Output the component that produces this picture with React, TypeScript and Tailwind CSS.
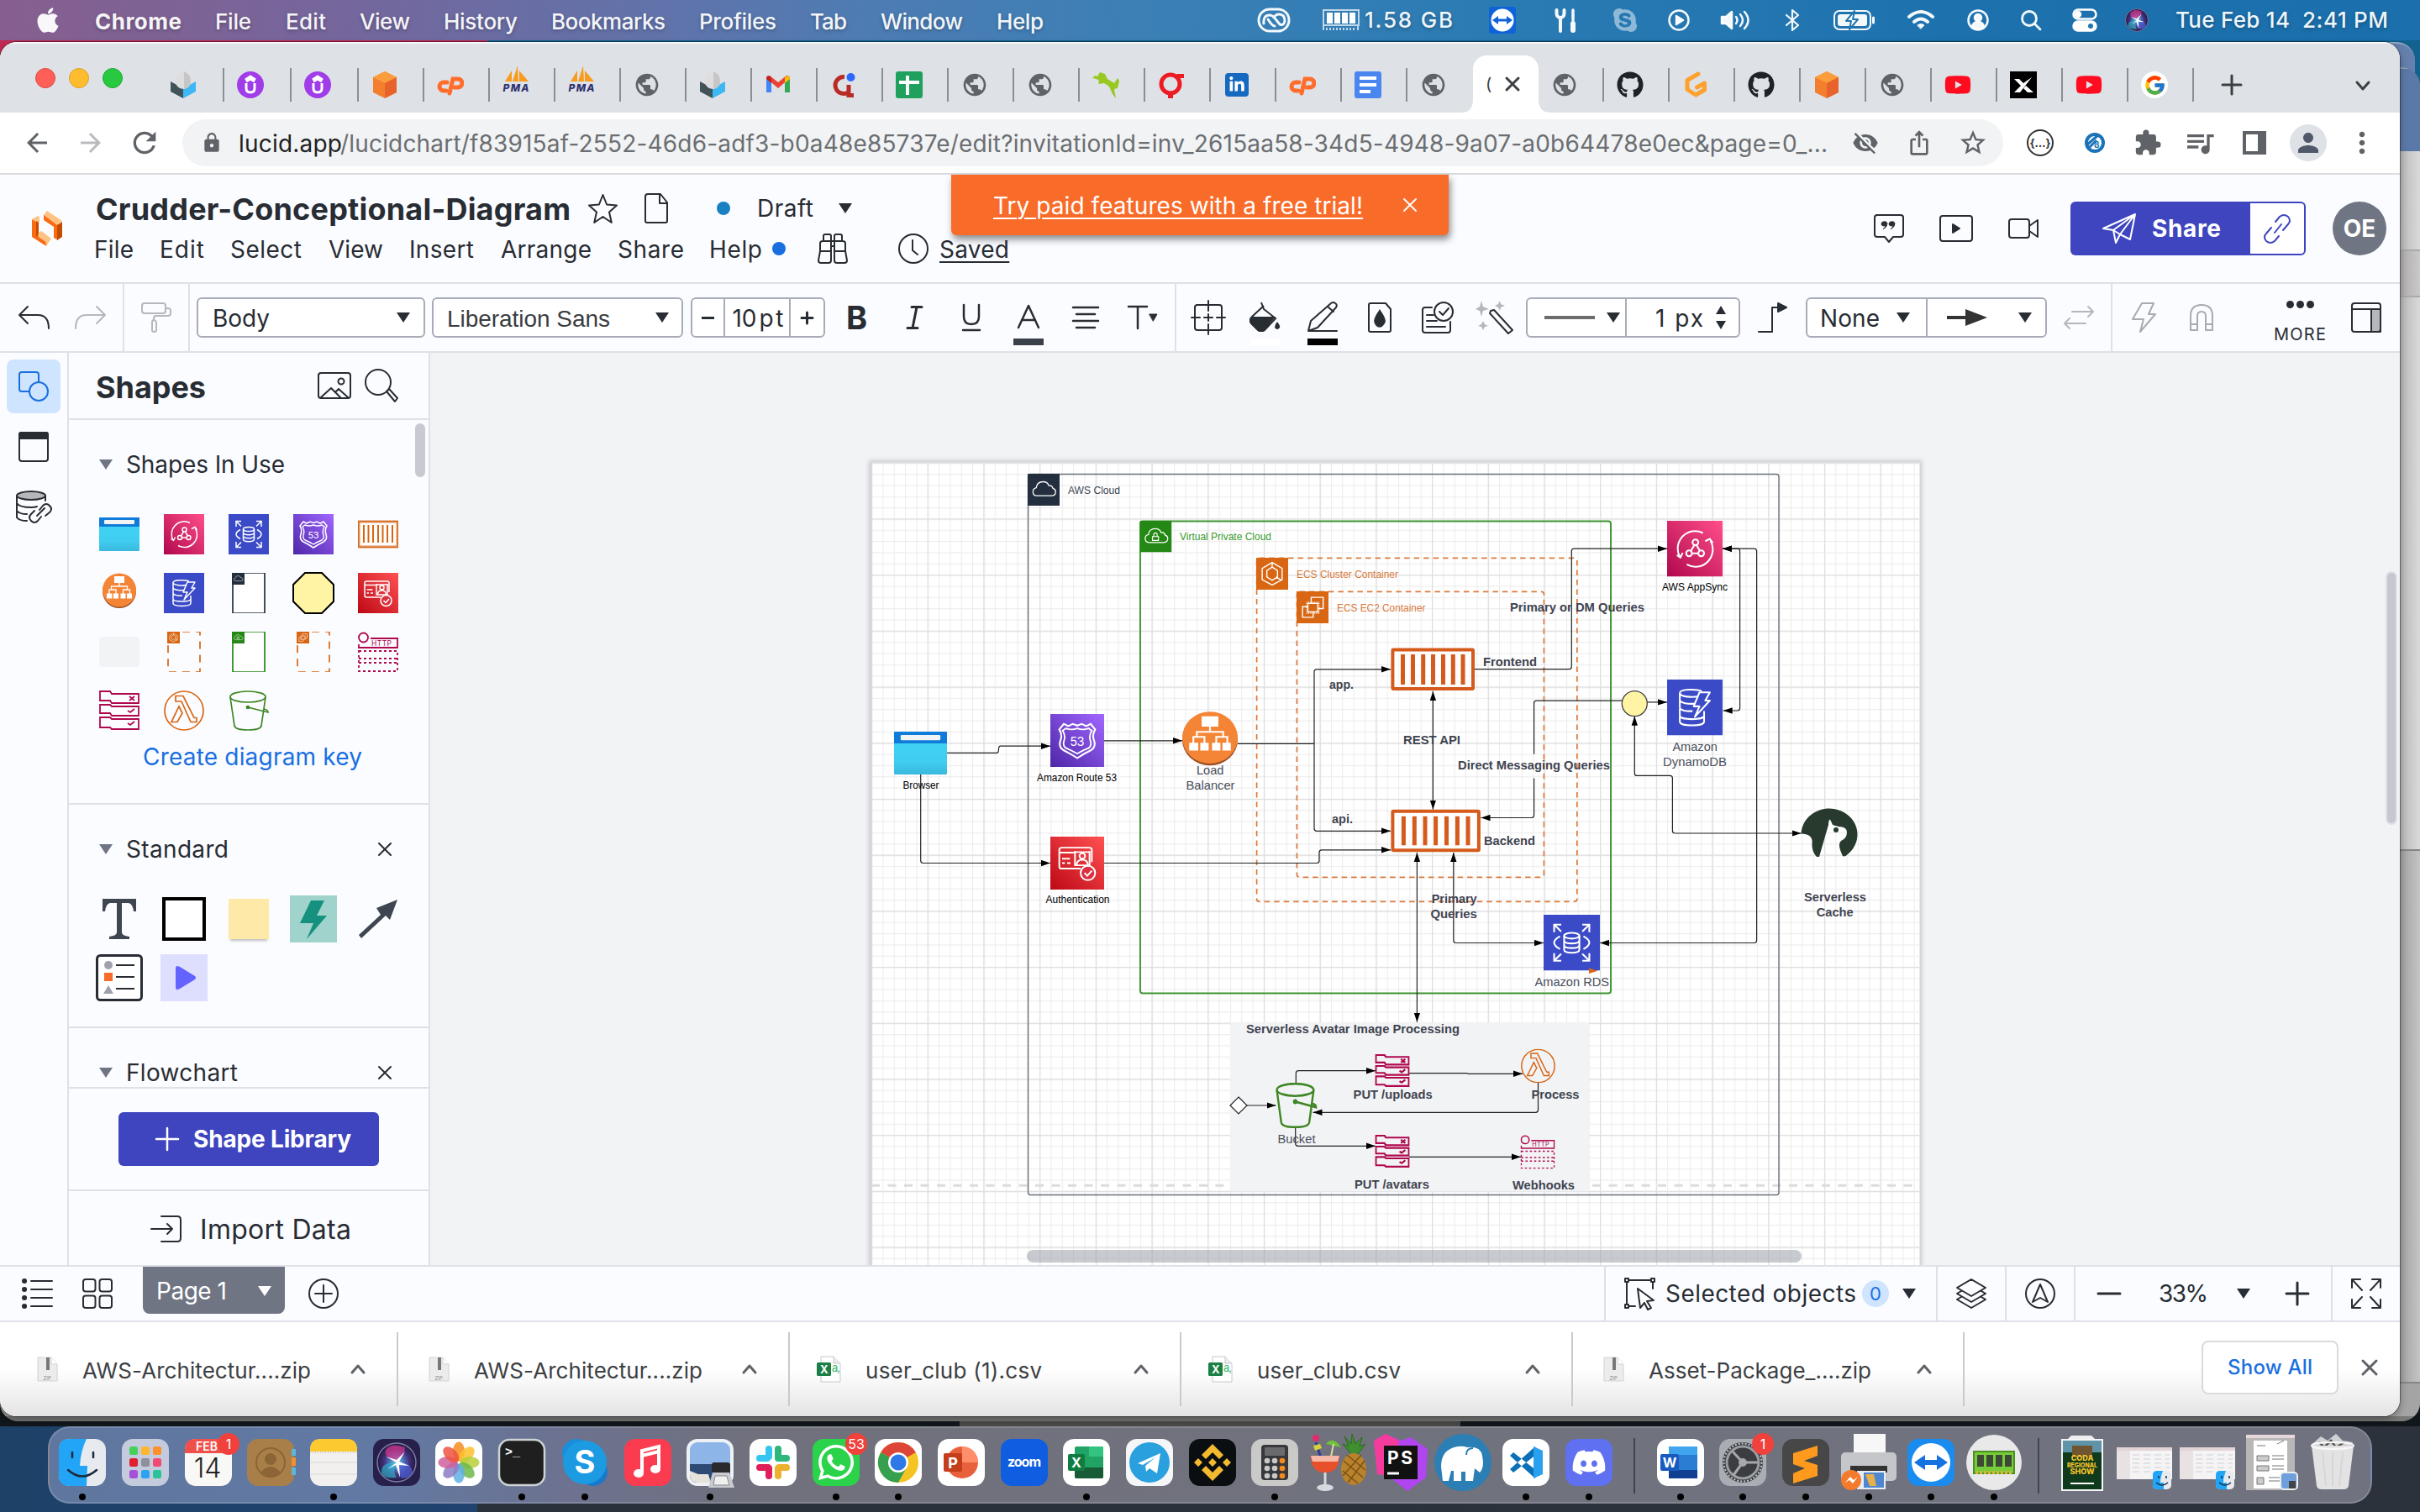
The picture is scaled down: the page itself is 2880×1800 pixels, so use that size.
import React, { useLayoutEffect, useRef, useState } from "react";
import {
  MdArrowBack, MdArrowForward, MdRefresh, MdLock, MdVisibilityOff, MdIosShare, MdStarBorder,
  MdExtension, MdQueueMusic, MdMoreVert, MdPerson, MdPublic,
} from "react-icons/md";
import { FaApple, FaGithub, FaLinkedinIn, FaYoutube, FaSkype, FaDiscord, FaWhatsapp } from "react-icons/fa";
import { FcGoogle } from "react-icons/fc";

/* ---------- helpers ---------- */

/** Text tracked so that it spans the given width. */
function Fit({ w, children, className = "" }: { w: number; children: string; className?: string }) {
  const ref = useRef<HTMLSpanElement>(null);
  const [ls, setLs] = useState(0);
  useLayoutEffect(() => {
    if (!ref.current) return;
    const natural = ref.current.getBoundingClientRect().width;
    setLs((w + 2 - natural) / Math.max(1, children.length - 1));
  }, [w, children]);
  return (
    <span className="block flex-none pt-[2px]" style={{ width: w }}>
      <span ref={ref} className={"-ml-px inline-block whitespace-pre leading-none " + className} style={{ letterSpacing: ls }}>
        {children}
      </span>
    </span>
  );
}

type IP = { w?: number; h?: number; sw?: number; className?: string; children?: React.ReactNode };
function Ico({ w = 36, h = 36, sw = 2, className = "", children }: IP) {
  return (
    <svg width={w} height={h} viewBox={`0 0 ${w} ${h}`} fill="none" stroke="currentColor" strokeWidth={sw}
      strokeLinecap="round" strokeLinejoin="round" className={"flex-none overflow-visible " + className}>
      {children}
    </svg>
  );
}
const Tri = ({ className = "" }: { className?: string }) => (
  <svg width="16" height="12" viewBox="0 0 16 12" className={"flex-none " + className}><path d="M0 0h16L8 12z" fill="currentColor" /></svg>
);
const Cross = ({ s = 16, sw = 2, className = "" }: { s?: number; sw?: number; className?: string }) => (
  <Ico w={s} h={s} sw={sw} className={className}><path d={`M1 1L${s - 1} ${s - 1}M${s - 1} 1L1 ${s - 1}`} /></Ico>
);
const Sep = ({ className = "" }: { className?: string }) => <div className={"w-[2px] flex-none self-stretch bg-[#dfe0e8] " + className} />;

/* ---------- menu bar ---------- */

function MenuBar() {
  return (
    <div className="flex h-12 w-full flex-none items-center bg-[linear-gradient(90deg,#865f8f_0%,#75669c_14%,#5f74ab_28%,#4d7cb3_36%,#3a80b6_48%,#2b7bb3_62%,#1d72ae_80%,#1a6fac_100%)] text-[26px] font-medium text-white/95 [text-shadow:0_2px_4px_rgba(0,0,0,.25)]">
      <FaApple className="ml-[41px] h-[34px] w-[32px] flex-none" />
      <div className="w-[41px] flex-none" />
      <Fit w={101} className="font-bold">Chrome</Fit>
      <div className="w-[42px] flex-none" />
      <Fit w={41}>File</Fit>
      <div className="w-[43px] flex-none" />
      <Fit w={46}>Edit</Fit>
      <div className="w-[42px] flex-none" />
      <Fit w={58}>View</Fit>
      <div className="w-[42px] flex-none" />
      <Fit w={86}>History</Fit>
      <div className="w-[42px] flex-none" />
      <Fit w={134}>Bookmarks</Fit>
      <div className="w-[42px] flex-none" />
      <Fit w={90}>Profiles</Fit>
      <div className="w-[42px] flex-none" />
      <Fit w={42}>Tab</Fit>
      <div className="w-[42px] flex-none" />
      <Fit w={96}>Window</Fit>
      <div className="w-[42px] flex-none" />
      <Fit w={54}>Help</Fit>

      <Ico w={40} h={30} sw={3} className="ml-[255px]">
        <path d="M15 2H25A13 13 0 0 1 25 28H15A13 13 0 0 1 15 2Z" />
        <path d="M8 19q-1-10 7-10 4 0 8 6l4 5q5 2 6-4 0-8-7-8-4 0-6 4" />
        <path d="M13 14q5 8 8 8" />
      </Ico>
      <svg width="44" height="26" viewBox="0 0 44 26" className="ml-[38px] flex-none">
        <path d="M1 1h42v18H1z" fill="none" stroke="#ffffffb0" strokeWidth="2" />
        <path d="M5 4h7v13H5zM14 4h7v13h-7zM23 4h7v13h-7zM32 4h7v13h-7z" fill="#fff" />
        <path d="M1 25v-5M5 25v-3M9 25v-3M13 25v-3M17 25v-3M21 25v-3M25 25v-3M29 25v-3M33 25v-3M37 25v-3M42 25v-5" stroke="#ffffffb0" strokeWidth="2" />
      </svg>
      <div className="w-[7px] flex-none" />
      <Fit w={103} className="relative -top-[2px]">1.58 GB</Fit>
      <svg width="32" height="32" viewBox="0 0 32 32" className="ml-[44px] flex-none">
        <rect width="32" height="32" rx="3" fill="#0e63d8" /><circle cx="16" cy="16" r="13.500" fill="#fff" />
        <path d="M4 16l7-5v3.500h10V11l7 5-7 5v-3.500H11V21z" fill="#0e63d8" />
      </svg>
      <Ico w={28} h={30} sw={4} className="ml-[46px]">
        <path d="M7 12v16M2.500 3v4c0 3 2 5 4.500 5s4.500-2 4.500-5V3" />
        <path d="M22 3v12" strokeWidth="3.500" /><path d="M22 19v8" strokeWidth="6" />
      </Ico>
      <FaSkype className="ml-[40px] h-8 w-8 flex-none opacity-50" />
      <Ico w={26} h={26} sw={2.500} className="ml-[35px]"><circle cx="13" cy="13" r="11.500" /><path d="M10 8l8 5-8 5z" fill="currentColor" /></Ico>
      <Ico w={36} h={26} sw={2.500} className="ml-[37px]">
        <path d="M1 9h5l7-6v20l-7-6H1z" fill="currentColor" /><path d="M18 9q3 4 0 8M23 6q6 7 0 14M28 3q9 10 0 20" />
      </Ico>
      <Ico w={18} h={28} sw={2.200} className="ml-[40px]"><path d="M2 8l14 12-7 6V2l7 6L2 20" /></Ico>
      <Ico w={50} h={24} className="ml-[40px]">
        <rect x="1" y="1" width="43" height="22" rx="6" /><path d="M47.500 9v6" strokeWidth="3" />
        <rect x="5" y="5" width="35" height="14" rx="3" fill="currentColor" stroke="none" />
        <path d="M25 1L15 13h6l-2 10 10-12h-6z" fill="#fff" stroke="#2276b0" />
      </Ico>
      <Ico w={32} h={24} sw={4} className="ml-[38px]"><path d="M2 8q14-12 28 0M8 14q8-7 16 0" /><path d="M12 18q4-3 8 0l-4 4z" fill="currentColor" strokeWidth="1" /></Ico>
      <Ico w={26} h={26} sw={2.500} className="ml-[39px]"><circle cx="13" cy="13" r="11.500" /><circle cx="13" cy="10" r="4" fill="currentColor" /><path d="M6 21q1-6 7-6t7 6q-7 5-14 0" fill="currentColor" /></Ico>
      <Ico w={24} h={24} sw={2.800} className="ml-[38px]"><circle cx="10" cy="10" r="8.500" /><path d="M16.500 16.500L23 23" /></Ico>
      <svg width="30" height="28" viewBox="0 0 30 28" className="ml-[37px] flex-none" fill="none" stroke="#fff" strokeWidth="2.500">
        <rect x="1.500" y="1.500" width="27" height="11" rx="5.500" /><circle cx="7" cy="7" r="3" fill="#fff" />
        <rect x="1.500" y="15.500" width="27" height="11" rx="5.500" fill="#fff" /><circle cx="22" cy="21" r="3" fill="#2276b0" stroke="none" />
      </svg>
      <Siri className="ml-[33px] h-7 w-7" />
      <div className="w-[33px] flex-none" />
      <Fit w={134} className="relative -top-[2px]">Tue Feb 14</Fit>
      <div className="w-[17px] flex-none" />
      <Fit w={100} className="relative -top-[2px]">2:41 PM</Fit>
    </div>
  );
}

function Siri({ className = "" }: { className?: string }) {
  return (
    <svg viewBox="0 0 48 48" className={"flex-none " + className}>
      <defs><radialGradient id="siri"><stop offset="0" stopColor="#9fe6f0" /><stop offset=".3" stopColor="#4b86c8" /><stop offset=".65" stopColor="#43307c" /><stop offset="1" stopColor="#201a3e" /></radialGradient></defs>
      <circle cx="24" cy="24" r="23" fill="url(#siri)" stroke="#7d7aa8" strokeWidth="1.500" />
      <path d="M24 24Q6 16 12 8t22-2Q34 14 24 24" fill="#d8388c" opacity=".7" />
      <path d="M24 24Q6 24 6 34t18 8Q18 32 24 24" fill="#2fb6c9" opacity=".65" />
      <path d="M24 24Q38 22 42 32T30 43Q22 34 24 24" fill="#4e62d8" opacity=".7" />
      <path d="M24 24L11 17l13 4L34 11 27 23l12 5-12-1 1 15-5-15-10 5z" fill="#fff" />
    </svg>
  );
}

/* ---------- tab strip ---------- */

const fav: Record<string, React.ReactNode> = {
  egg: (<svg viewBox="0 0 32 32"><path d="M1 12l15 8v12L1 24z" fill="#41525a" /><path d="M31 12l-15 8v12l15-8z" fill="#3db8f5" /><ellipse cx="16" cy="10.500" rx="9.500" ry="10.500" fill="#dedede" /><path d="M17 0q9 4 8 14-2 6-8 7z" fill="#c6c6c6" /></svg>),
  udemy: (<svg viewBox="0 0 32 32"><circle cx="16" cy="16" r="16" fill="#a03ce8" /><path d="M10 10l6-4 6 4M11 14v6q0 5 5 5t5-5v-6M11 12l5-3 5 3" fill="none" stroke="#fff" strokeWidth="3" /></svg>),
  cube: (<svg viewBox="0 0 32 32"><path d="M16 0l14 7v18l-14 7-14-7V7z" fill="#f37f2e" /><path d="M16 0l14 7-14 7L2 7z" fill="#fa9d3a" /><path d="M30 7v18l-14 7V14z" fill="#e8622b" /></svg>),
  cp: (<svg viewBox="0 0 32 32" fill="none" stroke="#ff6c2c" strokeWidth="5" strokeLinecap="round"><path d="M12 13H8a5 5 0 0 0 0 10h3M15 26l4-17h6a5 5 0 0 1 0 10h-4" /></svg>),
  pma: (
    <div className="flex w-8 flex-col items-center">
      <svg width="32" height="20" viewBox="0 0 32 20"><path d="M3 19L11 6v13zM12 19L18 0l1 19zM20 19V6l11 13z" fill="#f89c1f" /></svg>
      <Fit w={29} className="relative -top-[9px] text-[12px] font-extrabold italic text-[#2f3170]">PMA</Fit>
    </div>
  ),
  globe: <MdPublic className="h-8 w-8 text-[#5f6368]" />,
  gmail: (<svg viewBox="0 0 32 32"><path d="M2 8v17h6V13z" fill="#4285f4" /><path d="M30 8v17h-6V13z" fill="#34a853" /><path d="M2 8q0-3 4-3l10 8 10-8q4 0 4 3l-14 12z" fill="#ea4335" /><path d="M24 7q6-4 6 2l-6 5z" fill="#fbbc04" /><path d="M2 9q0-6 6-2v7z" fill="#c5221f" /></svg>),
  q: (<svg viewBox="0 0 32 32"><path d="M17 6.500a10 10 0 1 0 5 18v4H28M22 16v10" fill="none" stroke="#b92b27" strokeWidth="5" /><circle cx="24.500" cy="7" r="5" fill="#2e69ff" /></svg>),
  sheets: (<svg viewBox="0 0 32 32"><rect width="32" height="32" rx="3" fill="#1fa05c" /><path d="M14 5v23M4 13h24" stroke="#fff" strokeWidth="4" /></svg>),
  bird: (<svg viewBox="0 0 32 32"><path d="M0 8l3-3 3 1 3-5 6 2 3 6 8 5 4-6 2 3-2 9-4 1 2 11-4-5-4-9-6-4-7 1 1-4-3-2z" fill="#97c922" /></svg>),
  ring: (<svg viewBox="0 0 32 32"><circle cx="15" cy="15" r="11" fill="none" stroke="#ed1c24" strokeWidth="5" /><path d="M12 26h6v6h-6zM22 3h9v5h-6z" fill="#ed1c24" /></svg>),
  li: <div className="flex h-7 w-7 items-center justify-center rounded-sm bg-[#1569c0] text-white"><FaLinkedinIn className="h-5 w-5" /></div>,
  docs: (<svg viewBox="0 0 32 32"><rect width="32" height="32" rx="3" fill="#4a86f0" /><path d="M6 8h20M6 16h20M6 24h13" stroke="#fff" strokeWidth="4" /></svg>),
  github: <FaGithub className="h-8 w-8 text-[#1f2328]" />,
  gitpod: (<svg viewBox="0 0 32 32"><path d="M19 3L6 10.500v11L16 28l10.500-6V14l-9 5" fill="none" stroke="#ffa12e" strokeWidth="5" strokeLinejoin="round" strokeLinecap="round" /></svg>),
  yt: <FaYoutube className="h-[34px] w-[34px] text-[#ff0c20]" />,
  x: (<svg viewBox="0 0 32 32"><path d="M0 0h32v32H0z" /><path d="M5 9h6l5 5L26 7 12 25H5l8-8zM19 17l9 8h-7l-5-5z" fill="#fff" /></svg>),
  g: <div className="flex h-8 w-8 items-center justify-center rounded-full bg-white"><FcGoogle className="h-[27px] w-[27px]" /></div>,
};

function Tab({ k, wide = false, last = false }: { k: string; wide?: boolean; last?: boolean }) {
  return (
    <div className={"flex h-10 flex-none items-center pl-[15px] " + (wide ? "w-20 " : "w-[78px] ") + (last ? "" : "border-r-2 border-[#8b8f95]")}>
      <div className="flex h-8 w-8 flex-none items-center justify-center">{fav[k]}</div>
    </div>
  );
}

function TabStrip() {
  const before = ["cube", "cp", "pma", "pma", "globe", "egg", "gmail", "q", "sheets", "globe", "globe", "bird", "ring", "li", "cp", "docs", "globe"];
  const after = ["globe", "github", "gitpod", "github", "cube", "globe", "yt", "x", "yt", "g"];
  return (
    <div className="flex h-[84px] flex-none items-start border-t-2 border-white/70 bg-[#dee1e6]">
      <div className="ml-[42px] mt-[29px] flex gap-4">
        <div className="h-6 w-6 rounded-full border border-[#e0443e] bg-[#ff5f57]" />
        <div className="h-6 w-6 rounded-full border border-[#dea123] bg-[#febc2e]" />
        <div className="h-6 w-6 rounded-full border border-[#1aab29] bg-[#28c840]" />
      </div>
      <div className="ml-[41px] mt-[29px] flex">
        <Tab k="egg" wide /><Tab k="udemy" wide /><Tab k="udemy" wide />
        {before.map((k, i) => <Tab key={i} k={k} last={i === 16} />)}
      </div>
      <div className="relative mt-[14px] flex h-[68px] w-[78px] flex-none items-center rounded-t-[16px] bg-white">
        <svg width="14" height="16" viewBox="0 0 14 16" className="absolute -left-[14px] bottom-0"><path d="M14 0q0 16-14 16h14z" fill="#fff" /></svg>
        <svg width="14" height="16" viewBox="0 0 14 16" className="absolute -right-[14px] bottom-0"><path d="M0 0q0 16 14 16H0z" fill="#fff" /></svg>
        <span className="ml-[15px] w-[10px] text-[20px] leading-none text-[#3c4043]">(</span>
        <Cross s={16} sw={3} className="ml-[14px] text-[#3c4043]" />
      </div>
      <div className="mt-[29px] flex">{after.map((k, i) => <Tab key={i} k={k} />)}</div>
      <Ico w={24} h={24} sw={3} className="ml-[33px] mt-[37px] text-[#3c4043]"><path d="M12 1v22M1 12h22" /></Ico>
      <Ico w={18} h={12} sw={3} className="ml-[135px] mt-[44px] text-[#3c4043]"><path d="M2 2l7 8 7-8" /></Ico>
    </div>
  );
}

function AddressBar() {
  return (
    <div className="flex h-[74px] flex-none items-center border-b-2 border-[#dadcde] bg-white text-[#5f6368]">
      <MdArrowBack className="ml-[26px] h-9 w-9 flex-none" />
      <MdArrowForward className="ml-[28px] h-9 w-9 flex-none text-[#b9bbbe]" />
      <MdRefresh className="ml-[26px] h-10 w-10 flex-none" />
      <div className="ml-[25px] flex h-14 w-[2167px] flex-none items-center rounded-full bg-[#f1f3f4]">
        <MdLock className="ml-[22px] h-[26px] w-[26px] flex-none" />
        <div className="ml-[20px] flex text-[28px]">
          <Fit w={121} className="text-[#202124]">lucid.app</Fit>
          <Fit w={1768} className="text-[#6b6e72]">/lucidchart/f83915af-2552-46d6-adf3-b0a48e85737e/edit?invitationId=inv_2615aa58-34d5-4948-9a07-a0b64478e0ec&page=0_...</Fit>
        </div>
        <MdVisibilityOff className="ml-[30px] h-8 w-8 flex-none" />
        <MdIosShare className="ml-[32px] h-[32px] w-[32px] flex-none" />
        <MdStarBorder className="ml-[30px] h-[36px] w-[36px] flex-none" />
      </div>
      <div className="ml-[28px] flex h-8 w-8 flex-none items-center justify-center rounded-full border-2 border-[#333] text-[13px] font-bold leading-none text-[#333]">{"{…}"}</div>
      <svg width="26" height="30" viewBox="0 0 26 30" className="ml-[36px] flex-none"><circle cx="13" cy="15" r="10" fill="none" stroke="#1a73b8" strokeWidth="4" /><path d="M3 18L18 5M5 22l10-10" stroke="#1a73b8" strokeWidth="3" /><text x="12" y="21" fontSize="10" fontWeight="700" fill="#1a73b8">8</text></svg>
      <MdExtension className="ml-[33px] h-[34px] w-[34px] flex-none" />
      <MdQueueMusic className="ml-[25px] h-10 w-10 flex-none" />
      <svg width="28" height="28" viewBox="0 0 28 28" className="ml-[31px] flex-none"><path d="M0 0h28v28H0zM4 4v20h14V4z" fill="currentColor" fillRule="evenodd" /></svg>
      <div className="ml-[28px] flex h-11 w-11 flex-none items-center justify-center rounded-full bg-[#dee1e6] text-[#50596b]"><MdPerson className="h-9 w-9" /></div>
      <MdMoreVert className="ml-[22px] h-10 w-10 flex-none" />
    </div>
  );
}

/* ---------- document header ---------- */

const link = "underline decoration-2 underline-offset-[4px]";

function DocHeader() {
  return (
    <div className="relative flex h-[130px] flex-none items-center border-b-2 border-[#dfe0e8] bg-[#fbfcff] text-[#282c33]">
      <svg width="36" height="42" viewBox="0 0 36 42" className="ml-[38px] flex-none">
        <path d="M0 10l8 4v17l9 6v5L0 31z" fill="#f96b13" /><path d="M0 10l7-4 2 2v6l-1 1z" fill="#ffc280" />
        <path d="M8 14v17l-3-1V12z" fill="#c44b00" /><path d="M8 26l3-2 12 9-6 9-1-6-9-6z" fill="#ffc280" />
        <path d="M14 4l17 12v19l-5-3V19l-12-8z" fill="#f96b13" /><path d="M14 5l4-5 18 12-6 5z" fill="#ffc280" /><path d="M30 17l6-4v18l-6 4z" fill="#c44b00" />
      </svg>
      <div className="ml-[39px] flex flex-col">
        <div className="flex h-11 items-center pl-[2px]">
          <Fit w={563} className="text-[36px] font-bold">Crudder-Conceptional-Diagram</Fit>
          <Ico w={35} h={35} className="ml-[22px]"><path d="M17.500 1l4.600 11.500L34 13.500l-9 8 2.800 12.500-10.300-7-10.300 7L10 21.500l-9-8 11.900-1z" /></Ico>
          <Ico w={28} h={36} className="ml-[32px]"><path d="M1 4q0-3 3-3h15l8 10v22q0 2-2 2H3q-2 0-2-2zM18 2v10h8" /></Ico>
          <div className="ml-[58px] h-4 w-4 rounded-full bg-[#1a80c4]" />
          <div className="w-[33px]" />
          <Fit w={65} className="text-[28px]">Draft</Fit>
          <Tri className="ml-[31px]" />
        </div>
        <div className="mt-1 flex h-11 items-center text-[28px]">
          <Fit w={45}>File</Fit><div className="w-[33px]" />
          <Fit w={51}>Edit</Fit><div className="w-[33px]" />
          <Fit w={83}>Select</Fit><div className="w-[34px]" />
          <Fit w={63}>View</Fit><div className="w-[33px]" />
          <Fit w={75}>Insert</Fit><div className="w-[34px]" />
          <Fit w={106}>Arrange</Fit><div className="w-[33px]" />
          <Fit w={77}>Share</Fit><div className="w-[32px]" />
          <Fit w={61}>Help</Fit>
          <div className="ml-[13px] h-4 w-4 rounded-full bg-[#1a6fe0]" />
          <Ico w={36} h={36} className="ml-[38px]">
            <path d="M7 9V3q0-2 2-2h5q2 0 2 2v6M20 9V3q0-2 2-2h5q2 0 2 2v6M3 21V12q0-3 3-3h24q3 0 3 3v9M3 21h13v-12M20 9v12h13M16 21v11q0 3-3 3H4q-3 0-3-3l2-11M20 21v11q0 3 3 3h9q3 0 3-3l-2-11M16 15h4" />
          </Ico>
          <Ico w={36} h={36} className="ml-[60px]"><circle cx="18" cy="18" r="17" /><path d="M17 8v12l6 5" /></Ico>
          <div className="w-[14px]" />
          <Fit w={81} className={link}>Saved</Fit>
        </div>
      </div>

      <div className="absolute left-[1132px] top-0 flex h-[72px] w-[592px] items-center rounded-b-md bg-[#f96b28] text-[28px] text-white shadow-[2px_5px_8px_rgba(0,0,0,.45)]">
        <div className="w-[51px] flex-none" />
        <Fit w={438} className={link}>Try paid features with a free trial!</Fit>
        <Cross s={16} className="ml-[49px]" />
      </div>

      <div className="ml-auto flex items-center pr-4">
        <Ico w={36} h={34}><path d="M4 1h28q3 0 3 3v20q0 3-3 3H23l-5 6-5-6H4q-3 0-3-3V4q0-3 3-3z" /><path d="M12 9a2.500 2.500 0 1 0 2 3q0 4-3 6 5-3 5-7-1-3-4-2M21 9a2.500 2.500 0 1 0 2 3q0 4-3 6 5-3 5-7-1-3-4-2" fill="currentColor" strokeWidth="1" /></Ico>
        <Ico w={40} h={32} className="ml-[42px]"><rect x="1" y="1" width="38" height="30" rx="3" /><path d="M16 11v10l8-5z" fill="currentColor" /></Ico>
        <Ico w={36} h={24} className="ml-[42px]"><rect x="1" y="1" width="24" height="22" rx="3" /><path d="M25 9l10-7v20l-10-7" /></Ico>
        <div className="ml-[38px] flex h-16 w-[280px] items-center rounded-md bg-[#3f45bf] text-white">
          <Ico w={40} h={36} className="ml-[38px]"><path d="M1 18L39 1l-6 30-12-6-5 10-3-15zM13 20L39 1 21 25M13 20l8 5" /></Ico>
          <div className="w-[20px]" />
          <Fit w={80} className="text-[28px] font-bold">Share</Fit>
          <div className="ml-auto mr-[2px] flex h-[60px] w-[64px] items-center justify-center rounded-r bg-white text-[#3f45bf]">
            <Ico w={34} h={34}><path d="M14 22L22 12M15 9l5-6q5-4 10 0 4 5 0 9l-6 7M19 26l-5 6q-5 4-10 0-4-5 0-9l6-7" /></Ico>
          </div>
        </div>
        <div className="ml-8 flex h-16 w-16 items-center justify-center rounded-full bg-[#6f7583] text-[28px] font-bold text-white">OE</div>
      </div>
    </div>
  );
}

/* ---------- formatting toolbar ---------- */

const box = "flex h-12 flex-none items-center rounded-md border-2 border-[#a8acb8] bg-white text-[28px]";

function Toolbar() {
  return (
    <div className="flex h-[82px] flex-none items-center border-b-2 border-[#dfe0e8] bg-[#fbfcff] text-[#282c33]">
      <Ico w={37} h={28} className="ml-[22px]"><path d="M11 1L1 11l10 10M1 11h22q13 0 13 16" /></Ico>
      <Ico w={37} h={28} className="ml-[30px] text-[#b5b7bc]"><path d="M26 1l10 10-10 10M36 11H14Q1 11 1 27" /></Ico>
      <Sep className="ml-[20px]" />
      <Ico w={36} h={36} className="ml-[20px] text-[#b5b7bc]"><rect x="1" y="1" width="28" height="12" rx="3" /><path d="M29 7h3q3 0 3 3v3q0 3-3 3H18q-3 0-3 3v2M13 24q0-3 2-3t3 3v9q0 2-2.500 2T13 33z" /></Ico>
      <Sep className="ml-[20px]" />
      <div className={box + " ml-2 w-[272px] pl-[18px] pr-4"}><Fit w={66}>Body</Fit><Tri className="ml-auto" /></div>
      <div className={box + " ml-2 w-[299px] pl-[17px] pr-[15px]"}><Fit w={192} className="text-[#3a3d42] [font-family:'Liberation_Sans']">Liberation Sans</Fit><Tri className="ml-auto" /></div>
      <div className={box + " ml-[9px] w-[160px]"}>
        <div className="flex h-full w-[39px] items-center justify-center border-r-2 border-[#a8acb8]"><div className="h-[3px] w-[15px] bg-[#282c33]" /></div>
        <div className="flex h-full w-[78px] items-center justify-center gap-[5px] border-r-2 border-[#a8acb8] pl-[2px]"><Fit w={27}>10</Fit><Fit w={27}>pt</Fit></div>
        <div className="flex h-full flex-1 items-center justify-center"><Ico w={15} h={15} sw={3}><path d="M7.500 1v13M1 7.500h13" /></Ico></div>
      </div>
      <span className="ml-[25px] w-[23px] flex-none text-[38px] font-bold leading-none">B</span>
      <Ico w={19} h={28} sw={3} className="ml-[49px]"><path d="M6 1.500h12M1 26.500h12M12 1.500L7 26.500" /></Ico>
      <Ico w={22} h={30} sw={2.500} className="ml-[47px]"><path d="M2 0v14q0 9 9 9t9-9V0M1 30h20" /></Ico>
      <div className="ml-[39px] flex w-9 flex-none flex-col items-center pt-[18px]">
        <Ico w={26} h={28} sw={2.500}><path d="M1 27L13 1l12 26M5 18h16" /></Ico>
        <div className="mt-3 h-2 w-9 bg-[#3a414a]" />
      </div>
      <Ico w={32} h={26} sw={2.500} className="ml-[34px]"><path d="M1 1h30M5 9h22M1 17h30M5 25h22" /></Ico>
      <Ico w={36} h={28} sw={2.500} className="ml-[34px]"><path d="M1 1h22M12 1v26" /><path d="M26 10h9l-4.500 8z" fill="currentColor" strokeWidth="1" /></Ico>
      <Sep className="ml-[20px]" />
      <Ico w={40} h={40} className="ml-[18px]"><rect x="4" y="5" width="32" height="30" rx="3" /><path d="M20 0v12M20 16v8M20 28v12M0 20h10M15 20h10M30 20h10" /></Ico>
      <div className="ml-[29px] flex w-[37px] flex-none flex-col items-center pt-[14px]">
        <svg width="37" height="36" viewBox="0 0 37 36"><path d="M14 1l3 8 14 11-13 14q-4 3-8 0l-8-8q-3-4 1-8L17 5" fill="none" stroke="#282c33" strokeWidth="2" /><path d="M3 18h28L18 34q-4 3-8 0l-8-8q-3-4 1-8M33 24q4 5 3 7-3 4-6 0 0-4 3-7" fill="#282c33" /></svg>
        <div className="mt-2 h-2 w-9 bg-white" />
      </div>
      <div className="ml-[32px] flex w-9 flex-none flex-col items-center pt-[14px]">
        <Ico w={36} h={36}><path d="M1 35l3-12L28 2q3-2 5 0 3 2 1 5L12 31zM24 6l7 6M1 35h34" /></Ico>
        <div className="mt-2 h-2 w-9 bg-black" />
      </div>
      <Ico w={28} h={36} className="ml-[36px]"><path d="M3 1h18l6 7v25q0 2-2 2H3q-2 0-2-2V3q0-2 2-2z" /><path d="M14 9q8 11 6 15-3 6-6 5-4 1-6-5-2-4 6-15" fill="currentColor" strokeWidth="1" /></Ico>
      <Ico w={38} h={38} className="ml-[36px]"><path d="M12 7H4Q1 7 1 10v24q0 3 3 3h27q3 0 3-3V24M6 16h8M6 23h12M6 30h22" /><circle cx="26" cy="12" r="11" fill="#fbfcff" /><path d="M21 12l4 4 7-8" /></Ico>
      <Ico w={45} h={40} className="ml-[26px]"><path d="M18 12l4-1 22 24-5 4-22-24z" /><path d="M7 0l2 7 7 3-7 2-2 7-2-7-5-2 5-3zM29 0l1 4 5 2-5 2-1 4-2-4-4-2 4-2zM9 24l2 4 4 2-4 1-2 4-2-4-4-1 4-2z" fill="#b5b7bc" stroke="none" /></Ico>
      <div className={box + " ml-[15px] w-[255px]"}>
        <div className="flex h-full w-[118px] items-center border-r-2 border-[#a8acb8] pl-5"><div className="h-1 w-[60px] bg-[#6c6c6c]" /><Tri className="ml-[14px]" /></div>
        <div className="w-[35px]" /><Fit w={55}>1 px</Fit>
        <svg width="12" height="28" viewBox="0 0 12 28" className="ml-[16px] flex-none"><path d="M6 0l6 10H0zM6 28l6-10H0z" fill="#282c33" /></svg>
      </div>
      <Ico w={35} h={36} className="ml-[21px]"><path d="M1 35h16V6h8" /><path d="M24 1l10 5-10 5z" fill="currentColor" /></Ico>
      <div className={box + " ml-[22px] w-[287px]"}>
        <div className="flex h-full w-[143px] items-center border-r-2 border-[#a8acb8] pl-[16px]"><Fit w={69}>None</Fit><Tri className="ml-[21px]" /></div>
        <svg width="48" height="20" viewBox="0 0 48 20" className="ml-[23px] flex-none"><path d="M0 8h22V0l26 10-26 10v-8H0z" fill="#333" /></svg>
        <Tri className="ml-[37px]" />
      </div>
      <Ico w={36} h={28} className="ml-[20px] text-[#b5b7bc]"><path d="M10 7h25M29 1l6 6-6 6M26 21H1M7 15l-6 6 6 6" /></Ico>
      <Sep className="ml-[20px]" />
      <Ico w={29} h={36} className="ml-[23px] text-[#a9abb0]"><path d="M12 1h14l-6 13h8L10 35l4-15H1z" /></Ico>
      <Ico w={28} h={32} className="ml-[40px] text-[#a9abb0]"><path d="M1 31V14Q1 1 14 1t13 13v17h-8V14q0-5-5-5t-5 5v17zM1 24h8M19 24h8" /></Ico>
      <div className="ml-[73px] flex w-[60px] flex-none flex-col items-center pt-[12px]">
        <div className="flex gap-[3px]"><div className="h-[9px] w-[9px] rounded-full bg-[#282c33]" /><div className="h-[9px] w-[9px] rounded-full bg-[#282c33]" /><div className="h-[9px] w-[9px] rounded-full bg-[#282c33]" /></div>
        <div className="mt-[18px]"><Fit w={60} className="text-[20px]">MORE</Fit></div>
      </div>
      <Ico w={36} h={36} className="ml-[31px]"><path d="M24 8h11v27H24z" fill="#b5b7bc" /><rect x="1" y="1" width="34" height="34" rx="3" /><path d="M1 8h34M24 8v27" /></Ico>
    </div>
  );
}

/* ---------- AWS glyphs, drawn on a 48 unit square ---------- */

type GP = { x?: number; y?: number; width?: number; height?: number };
const G = ({ children, ...p }: GP & { children: React.ReactNode }) => (
  <svg viewBox="0 0 48 48" width={48} height={48} preserveAspectRatio="none" fill="none" {...p}>{children}</svg>
);
const grad = (id: string, a: string, b: string) => (
  <defs><linearGradient id={id} x1="0" y1="1" x2="1" y2="0"><stop offset="0" stopColor={a} /><stop offset="1" stopColor={b} /></linearGradient></defs>
);
const Browser = (p: GP) => (
  <G {...p}>
    <defs><linearGradient id="br" x1="0" y1="0" x2="0" y2="1"><stop offset="0" stopColor="#3fd5f5" /><stop offset=".7" stopColor="#3fcdf0" /><stop offset="1" stopColor="#3bb8de" /></linearGradient></defs>
    <rect x="0" y="4" width="48" height="40" rx="1" fill="url(#br)" /><path d="M0 5q0-1 1-1h46q1 0 1 1v10H0z" fill="#107bd8" /><rect x="6" y="7" width="36" height="5" rx="1" fill="#f1f3f5" />
  </G>
);
const AppSync = (p: GP) => (
  <G {...p}>{grad("as", "#b0084d", "#ff4f8b")}<path d="M0 0h48v48H0z" fill="url(#as)" />
    <g stroke="#fff" strokeWidth="1.500">
      <path d="M31 10.500A15 15 0 0 0 11 31M17 37.500A15 15 0 0 0 37.500 17M8.500 29.500l3 2 2-4M33 17.500l4-2 2.500 3.500" />
      <circle cx="24.500" cy="18.500" r="2.500" /><circle cx="19" cy="28" r="2.500" /><circle cx="29.500" cy="28" r="2.500" /><path d="M23.500 21l-3 5M25.500 21l3 5M21.500 28h5.500" />
    </g></G>
);
const Rds = (p: GP) => (
  <G {...p}><path d="M0 0h48v48H0z" fill="#3b4bc8" />
    <g stroke="#fff" strokeWidth="1.500"><path d="M9 15V8.500h6M9 8.500l6 6M33 8.500h6V15M39 8.500l-6 6M9 33v6.500h6M9 39.500l6-6M39 33v6.500h-6M39 39.500l-6-6" />
      <ellipse cx="24" cy="18" rx="6.500" ry="2.500" /><path d="M17.500 18v12c0 3.500 13 3.500 13 0V18M17.500 22c0 3.500 13 3.500 13 0M17.500 26c0 3.500 13 3.500 13 0" />
      <path d="M14 18.500q-10 5.500 0 11M34 18.500q10 5.500 0 11" /></g></G>
);
const Route53 = (p: GP) => (
  <G {...p}>{grad("r53", "#4d27a8", "#a166ff")}<path d="M0 0h48v48H0z" fill="url(#r53)" />
    <path d="M12 9l4 2 4-2 4 1.500L28 9l4 2 4-2 4 5q-3 5-1 10 2 6-3 9-6 3-12 7-6-4-12-7-5-3-3-9 2-5-1-10z" stroke="#fff" strokeWidth="1.600" />
    <path d="M14 13q5 2 10 0 5 2 10 0l3 2q-3 5-1 10 1 4-2 6-5 2-10 5-5-3-10-5-3-2-2-6 2-5-1-10z" stroke="#fff" strokeWidth="1.400" />
    <text x="24" y="29" fontSize="11" textAnchor="middle" fill="#fff" textLength="13" fontFamily="Inter">53</text></G>
);
const MiniContainer = (p: GP) => (
  <G {...p}><path d="M1 9h46v30H1z" fill="#fff" stroke="#e0905c" strokeWidth="3" /><path d="M.5 8.500h47v31H.5z" stroke="#d86613" /><path d="M7 13v21M12.500 13v21M18 13v21M24 13v21M29.500 13v21M35 13v21M41 13v21" stroke="#d86613" strokeWidth="2" /></G>
);
const LoadBalancer = (p: GP) => (
  <G {...p}><circle cx="24" cy="22" r="20" fill="#9d5025" /><circle cx="24" cy="20.500" r="20" fill="#f58536" />
    <path d="M18 4h12v8H18zM9 24.500h6.500v6H9zM17 24.500h6v6h-6zM25.500 24.500h6v6h-6zM33 24.500h6v6h-6z" fill="#fff" />
    <path d="M24 12v4M14.500 20v-4h19v4M12 25v-5h8v5M28.500 25v-5h8v5" stroke="#fff" strokeWidth="1.300" /></G>
);
const Dynamo = (p: GP) => (
  <G {...p}><path d="M0 0h48v48H0z" fill="#3b4bc8" />
    <g stroke="#fff" strokeWidth="1.500" strokeLinejoin="round"><path d="M30 10c-4-2-19-2-19 1.500s12 4 15 3M11 11.500v6c0 2.500 8 4 13 3M11 18v6c0 2.500 6 3.500 11 3M11 25v6c0 4 21 4 21 0v-4M11 32v4c0 4.500 21 4.500 21 0v-5" />
      <path d="M28 11h9l-4 7h4L24 32l4-9h-5z" fill="#3b4bc8" /></g></G>
);
const Auth = (p: GP) => (
  <G {...p}>{grad("au", "#bd0816", "#ff5252")}<path d="M0 0h48v48H0z" fill="url(#au)" />
    <g stroke="#fff" strokeWidth="1.500"><path d="M27 29H10q-2 0-2-2V12q0-2 2-2h25q2 0 2 2v11M8 14.500h14M10.500 20h7M10.500 24h2.500M15 24h3" />
      <path d="M22 14h13M22 13v13h13V13" /><circle cx="28.500" cy="17.500" r="2.500" /><path d="M23.500 26q0-5 5-5t5 5" /><circle cx="33.500" cy="33" r="6.500" fill="#dc3040" /><path d="M30.500 33l2.500 2.500 4-4.500" /></g></G>
);
const cloudPath = "M14 33q-6 0-6-6 0-5 5-6 1-9 10-9 7 0 9 6 5-1 6 4 4 1 4 5 0 6-6 6z";
const CloudTile = (p: GP) => <G {...p}><path d="M0 0h48v48H0z" fill="#232f3e" /><path d={cloudPath} stroke="#fff" strokeWidth="1.600" /></G>;
const VpcTile = (p: GP) => <G {...p}><path d="M0 0h48v48H0z" fill="#248814" /><path d={cloudPath} stroke="#fff" strokeWidth="1.600" /><path d="M19 24h9v6h-9zM21 24v-4q2.500-3 5 0v4" stroke="#fff" strokeWidth="1.500" /></G>;
const EcsTile = (p: GP) => <G {...p}><path d="M0 0h48v48H0z" fill="#d86613" /><path d="M24 7l15 9v17l-15 8-15-8V16zM24 14l8 5v10l-8 5-8-5V19zM24 14V7M30 29l8 5" stroke="#fff" strokeWidth="1.800" /></G>;
const Ec2Tile = (p: GP) => <G {...p}><path d="M0 0h48v48H0z" fill="#d86613" /><path d="M17 18h15v13H17zM22 17V9h18v17h-7M25 32v7H9V23h7" stroke="#fff" strokeWidth="1.800" /><path d="M15 16h19v17H15z" stroke="#fff" strokeWidth="2" strokeDasharray="1 2" /></G>;
const Folders = (p: GP & { sw?: number }) => {
  const { sw = 1.8, ...r } = p;
  return <G {...r}><g stroke="#b0084d" strokeWidth={sw}><path d="M1 1h12l2 3h32v11H15l-2-3H1zM1 17h12l2 2h32v11H15l-2-3H1zM1 32h12l2 2h32v12H15l-2-2H1z" /><path d="M36 7l6 5M42 7l-6 5M34 24l3 2 5-4M34 39l3 2 5-4" /></g></G>;
};
const Lambda = (p: GP) => (
  <G {...p}><circle cx="24" cy="24" r="23" stroke="#d86613" strokeWidth="1.700" /><path d="M14 6.500h9l13 26h3v5h-7L21 13h-7zM18 19l4 8-6 10.500H9z" stroke="#d86613" strokeWidth="1.700" strokeLinejoin="miter" /></G>
);
const Bucket = (p: GP & { sw?: number }) => {
  const { sw = 1.7, ...r } = p;
  return <G {...r}><g stroke="#3f8624" strokeWidth={sw}><ellipse cx="23" cy="7.500" rx="21" ry="6.500" /><path d="M2 8l5 34q1 5 16 5t16-5l5-34" /><path d="M23 20l24 6q0-3-5-4" /><circle cx="23" cy="20" r="1.500" fill="#3f8624" /></g></G>;
};
const Http = (p: GP) => (
  <G {...p}><g stroke="#b0084d" strokeWidth="1.800"><circle cx="6.500" cy="7" r="5.500" /><path d="M15 8h32v11H1v-4" /><path d="M1 23h46v24H1zM1 32h46M1 37h46" strokeDasharray="3 3" /></g>
    <text x="28" y="17" fontSize="8.500" fill="#b0084d" textAnchor="middle" textLength="24" fontFamily="Inter">HTTP</text></G>
);
const Frame = ({ c, dash, tile }: { c: string; dash?: boolean; tile: React.ReactNode }) => (
  <G><rect x="5" y="0" width="38" height="48" rx="1" stroke={c} strokeWidth="1.700" strokeDasharray={dash ? "9 7" : undefined} fill={dash ? "none" : "#fff"} />{tile}</G>
);

/* ---------- left side ---------- */

function SectionTitle({ label, w, close = true }: { label: string; w: number; close?: boolean }) {
  return (
    <div className="flex h-8 flex-none items-center pl-9 pr-[44px]">
      <Tri className="text-[#6f7583]" /><div className="w-[17px]" />
      <Fit w={w} className="text-[28px]">{label}</Fit>
      {close && <Cross s={16} className="ml-auto" />}
    </div>
  );
}

function ShapesPanel() {
  const cell = "flex h-[70px] items-center justify-center";
  return (
    <div className="flex w-[430px] flex-none flex-col border-r-2 border-[#dfe0e8] bg-[#fbfcff] text-[#282c33]">
      <div className="flex h-20 flex-none items-center border-b-2 border-[#dfe0e8] pl-[33px]">
        <Fit w={129} className="relative top-px text-[36px] font-bold">Shapes</Fit>
        <Ico w={40} h={32} className="ml-[134px]"><rect x="1" y="1" width="38" height="30" rx="3" /><circle cx="28" cy="11" r="3.500" /><path d="M4 30l12-11 11 11M21 24l4-4 11 10" /></Ico>
        <Ico w={40} h={40} className="ml-4"><circle cx="16" cy="16" r="15" /><path d="M26 27l3-3 10 11-3 4z" /></Ico>
      </div>
      <div className="relative flex h-[794px] flex-none flex-col overflow-hidden">
        <div className="absolute right-[4px] top-1 h-16 w-3 rounded-full bg-[#c8cad2]" />
        <div className="flex h-[458px] flex-none flex-col border-b-2 border-[#dfe0e8] pt-[37px]">
          <SectionTitle label="Shapes In Use" w={187} close={false} />
          <div className="ml-[21px] mt-8 grid w-[385px] grid-cols-5 self-start">
            <div className={cell}><Browser /></div>
            <div className={cell}><AppSync /></div>
            <div className={cell}><Rds /></div>
            <div className={cell}><Route53 /></div>
            <div className={cell}><MiniContainer /></div>
            <div className={cell}><LoadBalancer /></div>
            <div className={cell}><Dynamo /></div>
            <div className={cell}><Frame c="#232f3e" tile={<CloudTile x={4} y={0} width={15} height={14} />} /></div>
            <div className={cell}><svg width="52" height="52" viewBox="0 0 52 52"><path d="M16 2h20l14 14v20L36 50H16L2 36V16z" fill="#fff4a3" stroke="#000" strokeWidth="2" /></svg></div>
            <div className={cell}><Auth /></div>
            <div className={cell}><div className="h-9 w-12 rounded-sm bg-[#f2f3f5]" /></div>
            <div className={cell}><Frame c="#d86613" dash tile={<EcsTile x={4} y={0} width={15} height={14} />} /></div>
            <div className={cell}><Frame c="#248814" tile={<VpcTile x={4} y={0} width={15} height={14} />} /></div>
            <div className={cell}><Frame c="#d86613" dash tile={<Ec2Tile x={4} y={0} width={15} height={14} />} /></div>
            <div className={cell}><Http /></div>
            <div className={cell}><Folders /></div>
            <div className={cell}><Lambda /></div>
            <div className={cell}><Bucket /></div>
          </div>
          <div className="ml-[89px] mt-[2px] flex h-9 items-center"><Fit w={259} className="text-[28px] text-[#1a6fe0]">Create diagram key</Fit></div>
        </div>
        <div className="flex h-[266px] flex-none flex-col border-b-2 border-[#dfe0e8] pt-[37px]">
          <SectionTitle label="Standard" w={120} />
          <div className="ml-[21px] mt-8 grid w-[385px] grid-cols-5">
            <div className={cell}><svg width="40" height="48" viewBox="0 0 40 48"><path d="M0 0h40v15h-3q-1-9-6-10h-8v35q0 4 9 5v3H8v-3q9-1 9-5V5H9Q4 6 3 15H0z" fill="#3f4651" /></svg></div>
            <div className={cell}><div className="h-[52px] w-[52px] border-4 border-black bg-white" /></div>
            <div className={cell}><div className="h-12 w-12 bg-[#ffe9a9] shadow-[0_4px_3px_-2px_rgba(0,0,0,.25)]" /></div>
            <div className={cell}><svg width="56" height="56" viewBox="0 0 56 56"><path d="M0 0h56v56H0z" fill="#9fd3cb" /><path d="M25 6h16l-9 18h12L20 52l8-19H12z" fill="#16917f" /></svg></div>
            <div className={cell}><svg width="46" height="46" viewBox="0 0 46 46"><path d="M0 42l26-24-5-8L46 0 37 24l-5-5L3 46z" fill="#3f4651" /></svg></div>
            <div className={cell}><svg width="56" height="56" viewBox="0 0 56 56"><rect x="1.500" y="1.500" width="53" height="53" rx="4" fill="#fff" stroke="#282c33" strokeWidth="3" /><circle cx="15" cy="13" r="5" fill="#9da1ab" /><path d="M10 22h10v10H10z" fill="#f96b28" /><path d="M9 47l6-10 6 10z" fill="#9da1ab" /><path d="M24 13h22M24 27h22M24 41h22" stroke="#282c33" strokeWidth="2" /></svg></div>
            <div className={cell}><svg width="56" height="56" viewBox="0 0 56 56"><path d="M0 0h56v56H0z" fill="#dedeff" /><path d="M18 17q0-5 5-2l18 11q2 2 0 4L23 41q-5 3-5-2z" fill="#6363ff" /></svg></div>
          </div>
        </div>
        <div className="flex-none pt-[37px]"><SectionTitle label="Flowchart" w={131} /></div>
      </div>
      <div className="flex h-[124px] flex-none items-center border-y-2 border-[#dfe0e8] pl-[59px]">
        <div className="flex h-16 w-[310px] items-center rounded-md bg-[#3f45bf] pl-[44px] text-white">
          <Ico w={28} h={28} sw={2.500}><path d="M14 1v26M1 14h26" /></Ico><div className="w-[18px]" />
          <Fit w={186} className="text-[28px] font-bold">Shape Library</Fit>
        </div>
      </div>
      <div className="flex flex-1 items-center pl-[98px] pt-[2px]">
        <Ico w={36} h={32}><path d="M12 1h19q4 0 4 4v22q0 4-4 4H12M0 16h25M19 10l6 6-6 6" /></Ico><div className="w-[23px]" />
        <Fit w={178} className="text-[32px]">Import Data</Fit>
      </div>
    </div>
  );
}

function Rail() {
  return (
    <div className="flex w-[82px] flex-none flex-col items-center border-r-2 border-[#dfe0e8] bg-[#fbfcff] pt-2 text-[#282c33]">
      <div className="flex h-16 w-16 items-center justify-center rounded-lg bg-[#cfe4ff] text-[#1a6fe0]">
        <Ico w={36} h={36}><path d="M12 24H4q-3 0-3-3V4q0-3 3-3h17q3 0 3 3v8" /><circle cx="24" cy="24" r="11" /></Ico>
      </div>
      <Ico w={36} h={36} className="mt-[22px]"><rect x="1" y="1" width="34" height="34" rx="3" /><path d="M1 3q0-2 2-2h30q2 0 2 2v5H1z" fill="currentColor" /></Ico>
      <Ico w={42} h={40} className="mt-[34px]"><ellipse cx="18" cy="6" rx="17" ry="5" fill="#b5b7bc" /><path d="M1 6v26q3 4 12 4M35 6v6M1 15q3 5 17 5 5 0 7-1M1 24q3 4 12 4" /><path d="M25 30l9-9M28 23l4-5q4-4 8 0t0 8l-5 4M30 31l-4 5q-4 4-8 0t0-8l4-4" /></Ico>
    </div>
  );
}

/* ---------- diagram ---------- */

const LBL: [string, number, number, number, number, string, boolean?][] = [
  ["AWS Cloud", 1271, 588, 62, 13, "#3b4553"],
  ["Virtual Private Cloud", 1404, 643, 109, 13, "#3b9a2c"],
  ["ECS Cluster Container", 1543, 688, 121, 13, "#d97a3c"],
  ["ECS EC2 Container", 1591, 728, 105.5, 13, "#d97a3c"],
  ["Browser", 1074.5, 939, 43, 13, "#000"],
  ["Amazon Route 53", 1234, 929.5, 95, 13, "#000"],
  ["Authentication", 1244.5, 1075, 76, 13, "#000"],
  ["AWS AppSync", 1978, 703, 78, 13, "#000"],
  ["Load", 1424, 922, 32.5, 14.5, "#4a4f5c"],
  ["Balancer", 1411.5, 940, 58, 14.5, "#4a4f5c"],
  ["Amazon", 1990.4, 894, 53.500, 14.5, "#4a4f5c"],
  ["DynamoDB", 1979, 911.5, 76, 14.5, "#4a4f5c"],
  ["Amazon RDS", 1826.5, 1173.5, 88.500, 14.5, "#4a4f5c"],
  ["Bucket", 1520.5, 1361, 45, 14.5, "#4a4f5c"],
  ["app.", 1582, 820, 29, 14.5, "#3f4450", true],
  ["api.", 1585, 980, 25, 14.5, "#3f4450", true],
  ["REST API", 1670, 886, 68, 14.5, "#3f4450", true],
  ["Frontend", 1765, 793, 64, 14.5, "#3f4450", true],
  ["Backend", 1766, 1006, 61, 14.5, "#3f4450", true],
  ["Primary or DM Queries", 1797, 728, 160, 14.5, "#3f4450", true],
  ["Direct Messaging Queries", 1735, 916, 181, 14.5, "#3f4450", true],
  ["Primary", 1703.7, 1074.5, 54, 14.5, "#3f4450", true],
  ["Queries", 1702.4, 1092.5, 55.500, 14.5, "#3f4450", true],
  ["Serverless", 2147, 1073, 74, 14.5, "#3f4450", true],
  ["Cache", 2161.7, 1091, 44, 14.5, "#3f4450", true],
  ["Serverless Avatar Image Processing", 1483, 1229.5, 254, 14.5, "#3f4450", true],
  ["PUT /uploads", 1610.6, 1308, 94, 14.5, "#3f4450", true],
  ["Process", 1822.5, 1308, 57, 14.5, "#3f4450", true],
  ["PUT /avatars", 1612, 1415, 89, 14.5, "#3f4450", true],
  ["Webhooks", 1800, 1415.5, 74, 14.5, "#3f4450", true],
];

function Container({ x, y, w, bars, by, bh }: { x: number; y: number; w: number; bars: number[]; by: number; bh: number }) {
  return (
    <g>
      <rect x={x + 2} y={y + 2} width={w - 4} height={46.500} rx="1" fill="#fff" fillOpacity=".6" stroke="#d45b1c" strokeWidth="4" />
      {bars.map((b) => <rect key={b} x={b - 2.500} y={by} width="5" height={bh} fill="#d45b1c" />)}
    </g>
  );
}

function Diagram() {
  const both = { markerStart: "url(#ah)", markerEnd: "url(#ah)" };
  const end = { markerEnd: "url(#ah)" };
  return (
    <svg width="2344" height="1086" viewBox="512 420 2344 1086" className="block" fontFamily="'Liberation Sans', sans-serif">
      <defs>
        <marker id="ah" markerUnits="userSpaceOnUse" markerWidth="12" markerHeight="8" refX="11" refY="4" orient="auto-start-reverse"><path d="M0 .3L11 4 0 7.700z" fill="#000" /></marker>
        <pattern id="minor" x="1037" y="550.700" width="13.340" height="13.340" patternUnits="userSpaceOnUse"><path d="M.5 0v13.340M0 .5h13.340" stroke="#ededed" strokeWidth="1.200" /></pattern>
        <pattern id="major" x="1037" y="550.700" width="66.700" height="66.700" patternUnits="userSpaceOnUse"><path d="M.6 0v66.700M0 .6h66.700" stroke="#dedede" strokeWidth="1.300" /></pattern>
        <filter id="ps" x="-5%" y="-5%" width="110%" height="110%"><feGaussianBlur stdDeviation="2.500" /></filter>
      </defs>
      <rect x="1034" y="548" width="1253" height="1000" fill="#c9cbd0" filter="url(#ps)" />
      <rect x="1037" y="550.700" width="1247.500" height="1000" fill="#fff" />
      <rect x="1037" y="550.700" width="1247.500" height="1000" fill="url(#minor)" />
      <rect x="1037" y="550.700" width="1247.500" height="1000" fill="url(#major)" />
      <path d="M1037 1411.300H2284" stroke="#dcdcdc" strokeWidth="3" strokeDasharray="10 9.500" />

      <g fill="none">
        <rect x="1223.500" y="564.500" width="893.500" height="858" rx="3" stroke="#6a707a" strokeWidth="1.400" />
        <rect x="1357" y="620.500" width="560" height="562" rx="3" stroke="#3d9430" strokeWidth="1.900" />
        <rect x="1495.600" y="664.300" width="381.200" height="409" rx="3" stroke="#dc7a3c" strokeWidth="1.700" strokeDasharray="6.500 5" />
        <rect x="1543.400" y="704.300" width="294" height="340" rx="3" stroke="#dc7a3c" strokeWidth="1.700" strokeDasharray="6.500 5" />
      </g>
      <rect x="1464" y="1217.300" width="427" height="201" fill="#f2f3f5" />

      <CloudTile x={1223} y={564} width={38} height={38} />
      <VpcTile x={1356.5} y={620} width={38} height={37.500} />
      <EcsTile x={1495} y={664} width={38} height={38} />
      <Ec2Tile x={1543} y={704} width={38} height={38} />

      <g fill="none" stroke="#222" strokeWidth="1.200">
        <path d="M1127 896.400H1186Q1188.500 896.400 1188.500 892T1191 888.200H1250" {...end} />
        <path d="M1095.700 922V1024.500Q1095.700 1027.500 1098.700 1027.500H1250" {...end} />
        <path d="M1314 881.800H1407" {...end} />
        <path d="M1314 1027.500H1567Q1570 1027.500 1570 1024.500V1014.800Q1570 1011.800 1573 1011.800H1655" {...end} />
        <path d="M1473 885.400H1564" /><path d="M1564 885V799.800Q1564 796.800 1567 796.800H1655" {...end} /><path d="M1564 885V986.300Q1564 989.300 1567 989.300H1655" {...end} />
        <path d="M1755 796.700H1867.300Q1870.300 796.700 1870.300 793.700V656.200Q1870.300 653.200 1873.300 653.200H1984" {...end} />
        <path d="M2050 653.200H2067.600Q2070.600 653.200 2070.600 656.200V843Q2070.600 846 2067.600 846H2050.700" {...both} />
        <path d="M2050 653.200H2087.600Q2090.600 653.200 2090.600 656.200V1119.500Q2090.600 1122.500 2087.600 1122.500H1904" {...both} />
        <path d="M1960 835.900H1984" {...end} />
        <path d="M1930 834.200H1828.600Q1825.600 834.200 1825.600 837.200V897.700" /><path d="M1825.600 926.400V970.500Q1825.600 973.500 1822.600 973.500H1762.500" {...end} />
        <path d="M1945.300 852.700V920.400Q1945.300 923.400 1948.300 923.400H1987.400Q1990.400 923.400 1990.400 926.400V989Q1990.400 992 1993.400 992H2143.500" {...both} />
        <path d="M1729.800 1015V1119.500Q1729.800 1122.500 1732.800 1122.500H1837" {...both} />
        <path d="M1686.400 1015V1216.700" {...both} />
        <path d="M1705.400 823V963.500" {...both} />
        <path d="M1484 1316H1518.500" {...end} />
        <path d="M1542.300 1289V1277.700Q1542.300 1274.700 1545.300 1274.700H1637" {...end} />
        <path d="M1677 1277.700H1745L1748 1278.300H1812" {...end} />
        <path d="M1830.500 1289V1321.300Q1830.500 1324.300 1827.500 1324.300H1562.500" {...end} />
        <path d="M1541.700 1342V1361.300Q1541.700 1364.300 1544.700 1364.300H1637" {...end} />
        <path d="M1677 1377.300H1810" {...end} />
        <path d="M1474 1306l10 10-10 10-10-10z" fill="#fff" />
      </g>

      <Browser x={1064} y={866} width={63} height={61} />
      <Route53 x={1250} y={850} width={64} height={63} />
      <Auth x={1250} y={996} width={64} height={63} />
      <LoadBalancer x={1400.400} y={846.500} width={79.200} height={74} />
      <AppSync x={1984} y={620} width={66} height={66.500} />
      <Dynamo x={1984} y={809} width={66} height={66.500} />
      <Rds x={1837} y={1089} width={67} height={66.500} />
      <path d="M1891 1152.400L1901.500 1155.700 1891 1159z" fill="#d86613" />
      <circle cx="1945.300" cy="837.600" r="15" fill="#fff4a3" stroke="#444" strokeWidth="1.300" />
      <Container x={1655.4} y={771.4} w={99.6} bars={[1669.5, 1681.5, 1693.7, 1705.500, 1717.500, 1729.300, 1741]} by={779} bh={36} />
      <Container x={1655.4} y={963.8} w={106.5} bars={[1670.4, 1683.3, 1696, 1708.6, 1721.500, 1734.4, 1747]} by={971.8} bh={34.500} />
      <path d="M2143.500 992.500A33.500 31 0 1 1 2200 1016Q2196 1020.500 2193 1019 2186 1005 2191 1001 2198 998 2198 991 2198 984 2188 984L2181 982 2178 975.500Q2176 976 2176 982L2165 1020H2162Q2156 1014 2156.500 1004 2158 993 2143.500 992.500Z" fill="#273a2d" />
      <circle cx="2185" cy="988" r="3" fill="#273a2d" />
      <Bucket x={1517.500} y={1289} width={50} height={54} sw={2.300} />
      <Folders x={1636.500} y={1255} width={41} height={39.500} sw={2.600} />
      <Folders x={1636.500} y={1351} width={41} height={39.500} sw={2.600} />
      <Lambda x={1810} y={1248.500} width={41} height={41} />
      <Http x={1809.500} y={1351} width={41} height={40.500} />

      {LBL.map(([t, x, y, w, s, c, b]) => (
        <text key={t + y} x={x} y={y} fontSize={s} fill={c} fontWeight={b ? 700 : 400} textLength={w} lengthAdjust="spacingAndGlyphs">{t}</text>
      ))}
    </svg>
  );
}

/* ---------- bottom bars ---------- */

function BottomBar() {
  return (
    <div className="flex h-[68px] flex-none items-center border-y-2 border-[#dfe0e8] bg-[#fbfcff] text-[#282c33]">
      <Ico w={36} h={36} className="ml-[26px]"><path d="M11 3h25M11 13h25M11 23h25M11 33h25" /><path d="M3 3h.1M3 13h.1M3 23h.1M3 33h.1" strokeWidth="6" /></Ico>
      <Ico w={36} h={36} className="ml-[36px]"><rect x="1" y="1" width="14.500" height="14.500" rx="3" /><rect x="20.500" y="1" width="14.500" height="14.500" rx="3" /><rect x="1" y="20.500" width="14.500" height="14.500" rx="3" /><rect x="20.500" y="20.500" width="14.500" height="14.500" rx="3" /></Ico>
      <div className="ml-[36px] flex h-14 w-[169px] flex-none items-center self-start rounded-b-lg bg-[#6f7583] pl-[17px] pt-[2px] text-white">
        <Fit w={82} className="text-[28px]">Page 1</Fit><Tri className="ml-[38px]" />
      </div>
      <Ico w={36} h={36} className="ml-[28px]"><circle cx="18" cy="18" r="17" /><path d="M18 8v20M8 18h20" /></Ico>
      <div className="ml-auto flex self-stretch">
        <Sep />
        <div className="flex w-[393px] items-center">
          <Ico w={38} h={38} className="ml-[22px]"><path d="M3 3h31M3 3v31M34 3v10M3 34h10" /><path d="M16 13l19 14-8 1 5 8-4 2-4-8-5 6z" fill="#fff" /><path d="M1 1h4v4H1zM32 1h4v4h-4zM1 32h4v4H1z" fill="#fff" /></Ico>
          <div className="w-[12px]" /><Fit w={225} className="text-[28px]">Selected objects</Fit>
          <div className="ml-[8px] flex h-8 w-8 items-center justify-center rounded-full bg-[#cfe4ff] text-[22px] text-[#1a6fe0]">0</div>
          <Tri className="ml-4" />
        </div>
        <Sep />
        <div className="flex w-[80px] items-center justify-center"><Ico w={36} h={36}><path d="M18 1l17 10-17 10L1 11zM6 15l-5 3 17 10 17-10-5-3M6 22l-5 3 17 10 17-10-5-3" /></Ico></div>
        <Sep />
        <div className="flex w-[80px] items-center justify-center"><Ico w={36} h={36}><circle cx="18" cy="18" r="17" /><path d="M18 7l9 21-9-5-9 5z" /></Ico></div>
        <Sep />
        <div className="flex w-[304px] items-center">
          <Ico w={28} h={28} sw={3} className="ml-[26px]"><path d="M1 14h26" /></Ico>
          <div className="w-[46px]" /><Fit w={57} className="text-[28px]">33%</Fit>
          <Tri className="ml-[35px]" />
          <Ico w={28} h={28} sw={3} className="ml-[42px]"><path d="M14 1v26M1 14h26" /></Ico>
        </div>
        <Sep />
        <div className="flex w-[80px] items-center justify-center"><Ico w={36} h={36}><path d="M1 11V1h10M1 1l12 13M25 1h10v10M35 1L23 14M1 25v10h10M1 35l12-13M35 25v10H25M35 35L23 22" /></Ico></div>
      </div>
    </div>
  );
}

function FileIcon({ csv }: { csv: boolean }) {
  return csv ? (
    <svg width="30" height="32" viewBox="0 0 30 32" className="-ml-[4px] mr-[4px] flex-none"><path d="M5 1h15l8 8v22H5z" fill="#fff" stroke="#c8c8c8" /><path d="M20 1v8h8" fill="#eee" stroke="#c8c8c8" /><rect x="0" y="8" width="17" height="16" rx="1.500" fill="#1b7f45" /><text x="4" y="21" fontSize="13" fontWeight="700" fill="#fff">X</text><text x="18" y="19" fontSize="13" fill="#35b66f" textLength="10">a,</text></svg>
  ) : (
    <svg width="30" height="32" viewBox="0 0 30 32" className="flex-none"><path d="M1 2h16l7 8v20H1z" fill="#ececec" stroke="#d2d2d2" /><path d="M17 2v8h7" fill="#fff" stroke="#d2d2d2" /><path d="M11 2h4v15h-4z" fill="#777" /><text x="7.500" y="28.500" fontSize="6" fill="#888">ZIP</text></svg>
  );
}

function Shelf() {
  const items: [string, number, boolean][] = [
    ["AWS-Architectur....zip", 270, false], ["AWS-Architectur....zip", 270, false],
    ["user_club (1).csv", 208, true], ["user_club.csv", 169, true], ["Asset-Package_....zip", 263, false],
  ];
  return (
    <div className="flex h-[112px] flex-none bg-[linear-gradient(180deg,#fff_0%,#fff_50%,#e4e4e4_100%)] pl-[8px]">
      {items.map(([n, w, csv], i) => (
        <div key={i} className="mt-3 flex h-[88px] w-[466px] flex-none items-center border-r-2 border-[#c9cacc]">
          <div className="w-[36px]" /><FileIcon csv={csv} /><div className="w-[25px]" />
          <Fit w={w} className="relative top-[2px] text-[26px] text-[#3c4043]">{n}</Fit>
          <Ico w={18} h={12} sw={3} className="ml-auto mr-[37px] text-[#5f6368]"><path d="M2 10l7-8 7 8" /></Ico>
        </div>
      ))}
      <div className="ml-auto mt-[22px] flex h-16 w-[163px] items-center justify-center rounded-lg border-2 border-[#d9dbde] bg-white">
        <Fit w={99} className="text-[24px] font-medium text-[#1a6fe0]">Show All</Fit>
      </div>
      <Cross s={18} sw={3} className="ml-[28px] mr-[27px] mt-[45px] text-[#5f6368]" />
    </div>
  );
}

/* ---------- dock ---------- */

const tile = (fill: string, extra?: React.ReactNode) => (<><rect x="8" y="8" width="56" height="56" rx="13" fill={fill} />{extra}</>);
const badge = (n: string) => (<><circle cx="60" cy="14" r="13" fill="#f0413c" /><text x="60" y="20" fontSize="16" textAnchor="middle" fill="#fff">{n}</text></>);
const petals = ["#f58d1e", "#fbc22c", "#b8cf3b", "#6fb94a", "#5fb0e0", "#8d7cc3", "#d05f9c", "#ee5340"];

const apps: Record<string, React.ReactNode> = {
  finder: tile("#e7ebf0", <><path d="M21 8h20q-7 14-8 32h9l-1 24H21Q8 64 8 51V21Q8 8 21 8z" fill="#22a5f7" /><path d="M24 24v6M49 24v6M19 45q17 15 34 0" stroke="#1b2a3c" strokeWidth="2.500" fill="none" strokeLinecap="round" /></>),
  launchpad: tile("#c3cbdc", <>{["#45d05a", "#ffb52e", "#ff8f2a", "#e0202e", "#8f9198", "#f24871", "#a550d8", "#2aa3f0", "#28c39a"].map((c, i) => <rect key={i} x={17 + (i % 3) * 14} y={17 + Math.floor(i / 3) * 14} width="10" height="10" rx="2.500" fill={c} />)}</>),
  calendar: (<>{tile("#f8f8f6", <><path d="M8 25v-4Q8 8 21 8h30q13 0 13 13v4z" fill="#f0504a" /><text x="34" y="22" fontSize="14" fontWeight="600" textAnchor="middle" fill="#fff">FEB</text><text x="35" y="54" fontSize="32" fontWeight="300" textAnchor="middle" fill="#222">14</text></>)}{badge("1")}</>),
  contacts: tile("#a97f49", <><path d="M61 20h5v8h-5zM61 42h5v9h-5z" fill="#5fb5d8" /><path d="M61 30h5v10h-5z" fill="#f09030" /><circle cx="36" cy="36" r="17" fill="none" stroke="#8b6535" strokeWidth="2" /><circle cx="36" cy="32" r="7" fill="#8b6535" /><path d="M24 48q12-14 24 0-12 9-24 0" fill="#8b6535" /></>),
  notes: tile("#f1f0ee", <><path d="M8 23v-2Q8 8 21 8h30q13 0 13 13v2z" fill="#fcc92e" /><path d="M8 24h56" stroke="#aaa" strokeDasharray="1 2" /><path d="M8 36h56M8 50h56" stroke="#d8d8d6" /></>),
  siri: tile("#26204a", <g transform="translate(12 12)"><svg width="48" height="48" viewBox="0 0 48 48"><Siri /></svg></g>),
  photos: tile("#fff", <>{petals.map((c, i) => <ellipse key={c} cx="36" cy="23" rx="7" ry="11.500" fill={c} opacity=".85" transform={`rotate(${i * 45} 36 36)`} />)}</>),
  terminal: (<><rect x="9" y="9" width="54" height="54" rx="12" fill="#1f1f1f" stroke="#cdd2d2" strokeWidth="2.500" /><text x="16" y="28" fontSize="15" fontWeight="700" fill="#fff" fontFamily="Liberation Mono">&gt;_</text></>),
  skype: (<><circle cx="26" cy="25" r="17" fill="#1a8ed8" /><circle cx="46" cy="47" r="17" fill="#1879cc" /><circle cx="36" cy="36" r="26" fill="#1c9ae2" /><text x="36" y="49" fontSize="38" fontWeight="700" textAnchor="middle" fill="#fff">S</text></>),
  music: tile("#fb3b4f", <><path d="M29 48V22l20-5v26M29 28l20-5" stroke="#fff" strokeWidth="4" fill="none" /><ellipse cx="25" cy="49" rx="6" ry="5" fill="#fff" /><ellipse cx="45" cy="44" rx="6" ry="5" fill="#fff" /></>),
  preview: (<>{tile("#eef1f5", <><rect x="12" y="12" width="48" height="48" rx="9" fill="#8db5e8" /><path d="M12 38h48v13q0 9-9 9H21q-9 0-9-9z" fill="#2d4a74" /><path d="M12 46l10 4 12 0 3 10H21q-9 0-9-9z" fill="#e6e3dd" /></>)}<rect x="38" y="36" width="22" height="12" rx="3" fill="#2a2a2c" /><path d="M39 48h20l6 18H34z" fill="#c9cbd0" /><path d="M42 52h14l3 11H40z" fill="#f0f0f0" stroke="#888" /></>),
  slack: tile("#fff", <g strokeWidth="8" strokeLinecap="round"><path d="M31 20v9M20 31h9" stroke="#36c5f0" /><path d="M42 20v9M42 31h10" stroke="#2eb67d" /><path d="M20 42h10M31 43v9" stroke="#e01e5a" /><path d="M42 43v9M43 42h9" stroke="#ecb22e" /></g>),
  whatsapp: (<>{tile("#2bd34b", <foreignObject x="12" y="12" width="48" height="48"><FaWhatsapp className="h-12 w-12 text-white" /></foreignObject>)}{badge("53")}</>),
  chrome: tile("#fff", <><circle cx="36" cy="36" r="24" fill="#f6c324" /><path d="M36 36L15.200 24a24 24 0 0 1 41.600 0z" fill="#dd4538" /><path d="M36 36L15.200 24A24 24 0 0 0 36 60l10-18z" fill="#35a04e" /><circle cx="36" cy="36" r="12" fill="#fff" /><circle cx="36" cy="36" r="9.500" fill="#2e78e8" /></>),
  powerpoint: tile("#fff", <><circle cx="37" cy="36" r="19" fill="#e8603c" /><path d="M37 17a19 19 0 0 1 19 19H37z" fill="#ff8f6b" /><rect x="15" y="25" width="22" height="22" rx="2" fill="#c43e1c" /><text x="26" y="43" fontSize="18" fontWeight="700" textAnchor="middle" fill="#fff">P</text></>),
  zoom: tile("#0f5de0", <text x="36" y="41" fontSize="16" fontWeight="700" textAnchor="middle" fill="#fff" textLength="40">zoom</text>),
  excel: tile("#fff", <><rect x="22" y="17" width="34" height="38" rx="2" fill="#21a366" /><path d="M39 17h15q2 0 2 2v10H39z" fill="#33c481" /><path d="M22 42h34v11q0 2-2 2H24q-2 0-2-2z" fill="#185c37" /><rect x="14" y="26" width="20" height="20" rx="2" fill="#107c41" /><text x="24" y="42" fontSize="16" fontWeight="700" textAnchor="middle" fill="#fff">X</text></>),
  telegram: tile("#f4f6f8", <><circle cx="36" cy="36" r="24" fill="#2ba0de" /><path d="M22 37l27-12-4 24-9-6-4 4-1-7 12-10-15 9z" fill="#fff" /></>),
  binance: tile("#0b0e11", <path d="M36 14l13 13-5 5-8-8-8 8-5-5zM36 58L23 45l5-5 8 8 8-8 5 5zM36 31l5 5-5 5-5-5zM19 31l5 5-5 5-5-5zM53 31l5 5-5 5-5-5z" fill="#f3ba2f" />),
  calc: tile("#c9cac8", <><rect x="20" y="15" width="32" height="42" rx="4" fill="#37383a" /><rect x="24" y="18" width="24" height="10" rx="1" fill="#6a6b6c" /><g fill="#c9c9c9">{[0, 1].map((c) => [0, 1, 2].map((r) => <circle key={c + "" + r} cx={27 + c * 9} cy={34 + r * 9} r="3.300" />))}</g><g fill="#f58a1f"><circle cx="45" cy="34" r="3.300" /><circle cx="45" cy="43" r="3.300" /><circle cx="45" cy="52" r="3.300" /></g></>),
  fruit: (<><path d="M52 26L42 14l7 3-5-12 8 9 1-12 4 12 8-8-3 11 7-3-9 12z" fill="#3f8f2e" stroke="#2b6a20" /><ellipse cx="55" cy="44" rx="15" ry="19" fill="#b9822c" /><path d="M43 34l23 20M47 27l22 18M42 46l18 15M68 34L48 60M64 27L42 52" stroke="#7a5216" strokeWidth="1.500" /><path d="M10 12l7 22" stroke="#2c3f9a" strokeWidth="3" /><circle cx="10" cy="7" r="4" fill="#e02b6d" /><path d="M7 16l8-2 2 5-8 3z" fill="#d8d23a" /><path d="M22 14q8-10 18 4z" fill="#6fc23a" /><path d="M31 14L27 34" stroke="#e0dca0" strokeWidth="2" /><path d="M4 28h34q0 20-17 20T4 28z" fill="#e8502c" /><path d="M4 28h34l-2 7H6z" fill="#f6b9a8" /><path d="M21 48v16" stroke="#d6dade" strokeWidth="3" /><ellipse cx="21" cy="66" rx="10" ry="4" fill="#d6dade" /></>),
  phpstorm: (<><path d="M4 10l14-8 18 8 12-4 20 14-2 34-22 16-18-14-18-8z" fill="#b146f0" /><path d="M4 10l14-8 16 8-12 42-14-2z" fill="#f53c9c" /><rect x="16" y="16" width="40" height="40" fill="#111" /><text x="20" y="38" fontSize="21" fontWeight="700" fill="#fff" textLength="30">PS</text><path d="M20 49h14" stroke="#fff" strokeWidth="3" /></>),
  mamp: (<><circle cx="36" cy="36" r="34" fill="#2b7fb4" /><path d="M10 41q0-21 20-24 6-1 11 1 16-2 18 10 3 14-3 20l-6-5-2 15h-9V47h-5v11h-9V46h-3l-3 12h-7z" fill="#fff" /><path d="M40 27q0-8 8-8" stroke="#2b7fb4" strokeWidth="2" fill="none" /></>),
  vscode: tile("#fff", <><path d="M47 17L17 44l4 4 28-22zM47 55L17 28l4-4 28 22z" fill="#0a70b8" /><path d="M45 17l11 5v28l-11 5z" fill="#2ba0ee" /></>),
  discord: tile("#5f70f0", <foreignObject x="15" y="15" width="42" height="42"><FaDiscord className="h-[42px] w-[42px] text-white" /></foreignObject>),
  word: tile("#fff", <><rect x="22" y="17" width="34" height="38" rx="2" fill="#2b7cd3" /><path d="M22 17h34v10H22z" fill="#41a5ee" /><path d="M22 45h34v10H22z" fill="#103f91" /><rect x="12" y="26" width="22" height="20" rx="2" fill="#185abd" /><text x="23" y="42" fontSize="16" fontWeight="700" textAnchor="middle" fill="#fff">W</text></>),
  settings: (<>{tile("#a9aeb4", <><circle cx="36" cy="36" r="24" fill="#3b3d40" /><circle cx="36" cy="36" r="19" fill="none" stroke="#9b9fa3" strokeWidth="3" /><circle cx="36" cy="36" r="22.500" fill="none" stroke="#c5c8cb" strokeWidth="2" strokeDasharray="2 2" /><path d="M36 36L24 23M36 36h18M36 36L25 51" stroke="#a5a8ac" strokeWidth="3" /><circle cx="36" cy="36" r="5" fill="#a5a8ac" /></>)}{badge("1")}</>),
  sublime: tile("#474747", <path d="M21 25l29-9v12l-16 6 16 5v13l-29 9V49l14-6-14-5z" fill="#ff9a1f" />),
  printer: (<><path d="M18 2h38v24H18z" fill="#f7f7f7" /><rect x="3" y="24" width="66" height="34" rx="5" fill="#c4c6c9" /><rect x="14" y="40" width="44" height="8" fill="#333" /><path d="M22 46h34v22H22z" fill="#e9eef5" /><path d="M30 48h24v18H30z" fill="#4e86d0" /><path d="M32 50h10l3 14h-8z" fill="#e8b04a" /><circle cx="15" cy="57" r="12" fill="#f47b2c" /><path d="M8 60l6-7 4 4 5-4-6 8-4-4z" fill="#fff" /></>),
  teamviewer: tile("#1a8cf0", <><circle cx="36" cy="36" r="23" fill="#fff" /><path d="M16 36l13-9v6h14v-6l13 9-13 9v-6H29v6z" fill="#1672e0" /></>),
  memory: (<><circle cx="36" cy="36" r="33" fill="#e9e9ea" /><path d="M12 23h48v26H12z" fill="#77cc3a" stroke="#4c8f22" strokeWidth="2" /><path d="M16 27h8v14h-8zM27 27h8v14h-8zM38 27h8v14h-8zM49 27h8v14h-8z" fill="#3c4a35" /><path d="M14 48h44" stroke="#d6b53a" strokeWidth="4" strokeDasharray="3 2" /></>),
  poster: (<><path d="M18 9l5-5h24l5 5z" fill="#eee" /><path d="M13 10h46v58H13z" fill="#103a1c" /><path d="M13 10h46v14H13z" fill="#5f93a8" /><path d="M24 16h24v14H24z" fill="#6f5630" /><text x="36" y="34" fontSize="9" fontWeight="800" textAnchor="middle" fill="#f7c52e">CODA</text><text x="36" y="42" fontSize="8" fontWeight="800" textAnchor="middle" fill="#f7c52e" textLength="36" lengthAdjust="spacingAndGlyphs">REGIONAL</text><text x="36" y="50" fontSize="9" fontWeight="800" textAnchor="middle" fill="#f7c52e">SHOW</text><path d="M22 61h28" stroke="#fff" strokeWidth="2" /><rect x="12" y="9" width="48" height="60" fill="none" stroke="#f4f4f4" strokeWidth="2" /></>),
  win: (<><rect x="3" y="18" width="66" height="38" fill="#f5f3f3" /><path d="M3 18h66v4H3z" fill="#e2d3d6" /><path d="M3 22h16v34H3z" fill="#e9e2e3" /><path d="M22 27h44M22 32h44M22 37h44M22 42h44M22 47h30" stroke="#c9d1da" strokeDasharray="8 5" /><rect x="46" y="46" width="22" height="22" rx="5" fill="#e7ebf0" /><path d="M51 46h7q-3 8-3 14h4v8h-8q-5 0-5-5V51q0-5 5-5z" fill="#22a5f7" /><path d="M50 60q7 6 14 0M53 52v3M62 52v3" stroke="#1b2a3c" strokeWidth="1.500" fill="none" /></>),
  page: (<><path d="M7 3h58v66H7z" fill="#b9b6b8" /><path d="M7 3h58v4H7z" fill="#e6d8da" /><path d="M16 10h40v57H16z" fill="#fff" /><path d="M20 16h10M44 14l8-4M20 28h14v6H20zM38 28h14M38 32h14M20 40h14v6H20zM38 40h14M38 44h14M20 54h8v8h-8zM34 54h18M34 58h18" stroke="#777" fill="#ccc" /><rect x="48" y="48" width="20" height="20" rx="4" fill="#6fa0dd" stroke="#eee" strokeWidth="2" /><path d="M58 58h8v9h-8z" fill="#444" /></>),
  trash: (<><path d="M12 14l10-9 8 5 10-8 8 8 12 2-4 10H16z" fill="#cfd2d4" /><path d="M20 12l6 6 8-8 6 8 10-6" stroke="#5b5250" strokeWidth="2.500" fill="none" /><path d="M11 16h50l-6 48q-1 4-6 4H23q-5 0-6-4z" fill="#e3e3e3" /><ellipse cx="36" cy="16" rx="25" ry="4" fill="none" stroke="#f8f8f8" strokeWidth="2" /><path d="M24 24l4 40M48 24l-4 40M36 24v40" stroke="#d6d6d6" strokeWidth="2" /></>),
};

function DockItem({ k, dot = false }: { k: string; dot?: boolean }) {
  return (
    <div className="flex w-[74.7px] flex-none flex-col items-center pt-[5px]">
      <svg width="72" height="72" viewBox="0 0 72 72" className="overflow-visible">{apps[k]}</svg>
      {dot && <div className="mt-[1px] h-2 w-2 rounded-full bg-black" />}
    </div>
  );
}

function Dock() {
  const main = ["finder*", "launchpad", "calendar", "contacts", "notes*", "siri", "photos", "terminal*", "skype*", "music", "preview*", "slack", "whatsapp*", "chrome*", "powerpoint", "zoom", "excel*", "telegram", "binance", "calc*", "fruit", "phpstorm", "mamp", "vscode*", "discord*"];
  const recent = ["word*", "settings*", "sublime*", "printer*", "teamviewer*", "memory*"];
  const rest = ["poster", "win", "win", "page", "trash"];
  const draw = (l: string[]) => l.map((k, i) => <DockItem key={i} k={k.replace("*", "")} dot={k.endsWith("*")} />);
  return (
    <div className="absolute left-[57px] top-[1698px] z-30 flex h-[92px] w-[2766px] rounded-[26px] border-2 border-white/15 bg-[linear-gradient(90deg,#5f779f_0%,#6279a3_14%,#6c7290_22%,#70717d_30%,#70737f_100%)] pl-[2px]">
      {draw(main)}
      <div className="mx-[16px] mt-3 h-[66px] w-[2px] flex-none bg-black/40" />
      {draw(recent)}
      <div className="ml-[15px] mr-[13px] mt-3 h-[66px] w-[2px] flex-none bg-black/40" />
      {draw(rest)}
    </div>
  );
}

/* ---------- page ---------- */

export default function App() {
  return (
    <div className="relative flex h-[1800px] w-[2880px] flex-col overflow-hidden bg-[linear-gradient(90deg,#1d4167_0%,#20436f_568px,#2a313a_568px,#2b323b_100%)] [font-family:Inter,sans-serif]">
      <MenuBar />
      <div className="absolute left-0 top-12 h-24 w-[580px] bg-[#c22a55]" />
      <div className="absolute left-[580px] top-12 h-24 w-[2300px] bg-[#12618f]" />
      <div className="absolute left-0 top-[1600px] h-[98px] w-[2880px] bg-[linear-gradient(180deg,#0e1215,#11171b)]" />
      <div className="absolute left-0 top-[50px] h-[1600px] w-[2874px] rounded-[22px] border-t-2 border-white/30 bg-[#6580ad]" />
      <div className="absolute left-0 top-[80px] flex h-[1612px] w-[2880px] flex-col overflow-hidden rounded-[22px] bg-[#7a7a79]">
        <div className="h-[100px] flex-none border-t-2 border-white/30 bg-[#5b79a8]" />
        <div className="h-[117px] flex-none bg-[linear-gradient(90deg,#b8b8b8_2856px,#dadada_2880px)]" />
        <div className="h-[57px] flex-none border-y-2 border-[#aaa8a9] bg-[linear-gradient(90deg,#acabab_2856px,#cbc8c9_2880px)]" />
        <div className="h-[657px] flex-none bg-[linear-gradient(90deg,#b6b6b6_2856px,#dadada_2880px)]" />
        <div className="h-[636px] flex-none border-y-2 border-[#858585] bg-[linear-gradient(90deg,#a0a0a0_2856px,#c4c4c4_2880px)]" />
        <div className="h-[39px] flex-none bg-[#a4a4a4]" />
        <div className="h-2 flex-none bg-[#7a7a79]" />
      </div>
      <div className="absolute left-[1142px] top-[1692px] h-[6px] w-[596px] bg-[#4b4a49]" />
      <div className="relative z-10 mt-[2px] flex h-[1636px] w-[2856px] flex-none flex-col overflow-hidden rounded-[20px] bg-white shadow-[0_0_0_1px_rgba(0,0,0,.35),0_4px_10px_rgba(0,0,0,.35)]">
        <TabStrip />
        <AddressBar />
        <DocHeader />
        <Toolbar />
        <div className="flex h-[1086px] flex-none">
          <Rail />
          <ShapesPanel />
          <div className="relative flex-1 overflow-hidden bg-[#f2f3f5]">
            <Diagram />
            <div className="absolute left-[710px] top-[1068px] h-[15px] w-[922px] rounded-full bg-[#a2a6ae]/60" />
            <div className="absolute right-[3px] top-[260px] h-[302px] w-[14px] rounded-full border-2 border-[#dfe1e5] bg-[#c5c8d0]" />
          </div>
        </div>
        <BottomBar />
        <Shelf />
      </div>
      <Dock />
    </div>
  );
}
